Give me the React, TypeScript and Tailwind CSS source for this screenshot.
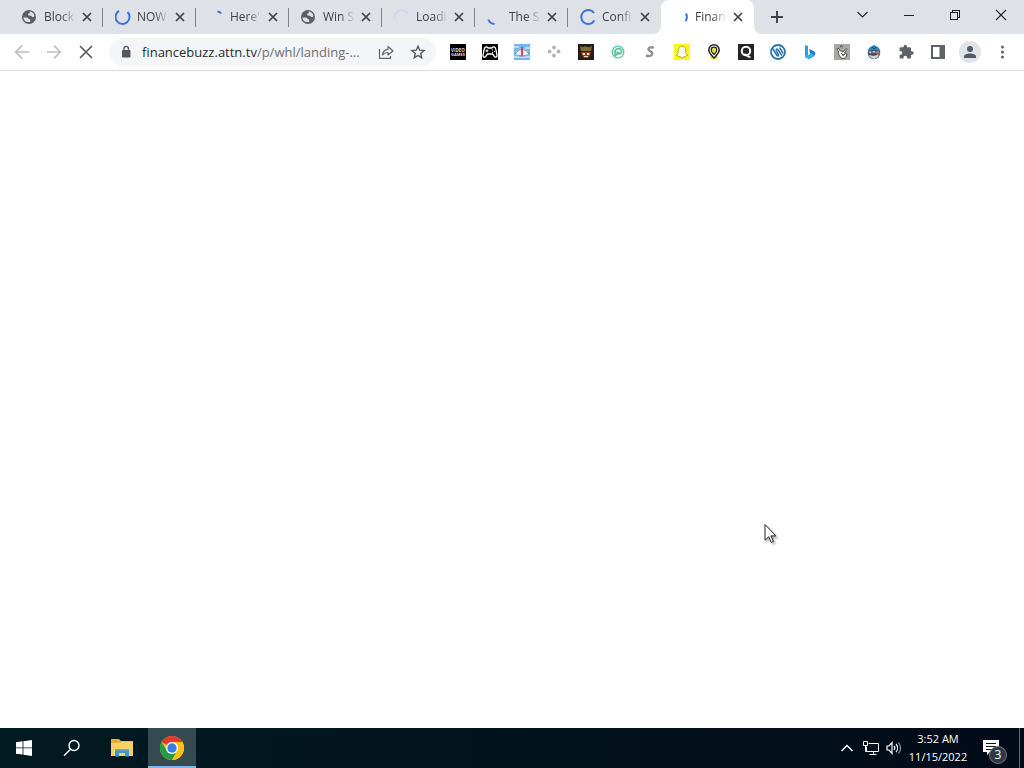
import type { ReactNode } from "react";

type TabInfo = { title: string; icon: ReactNode; active?: boolean; divider?: boolean };

function Globe() {
  return (
    <svg viewBox="0 0 16 16" className="size-4" aria-hidden="true">
      <circle cx="7" cy="8" r="7" fill="#5b5f64" />
      <path d="M1.5 8.4h3.200c1.500 0 1.800.8 1.800 1.800h1.700v2.600c-3.500 1.100-6.600-1-6.700-4.400zM7.600 2.500c2.100.1 4 1.500 4.600 3.400.3 1-.1 2.200-1.200 2.200-1.200 0-1-.9-1.800-1.200-.8-.3-2.400.2-3-.9-.4-.8.1-1.500 1-1.500.7 0 .7-.8.4-2z" fill="#dee1e6" />
    </svg>
  );
}

function Arc({ d, color = "#3b73dc", faint = false }: { d: string; color?: string; faint?: boolean }) {
  return (
    <svg viewBox="0 0 16 16" className="size-4" aria-hidden="true">
      <path d={d} fill="none" stroke={color} strokeWidth="2" strokeOpacity={faint ? 0.6 : 1} />
    </svg>
  );
}

const tabs: TabInfo[] = [
  { title: "Block", icon: <Globe />, divider: true },
  { title: "NOW", icon: <Arc d="M4 1.9A7 7 0 1 0 12.500 3" />, divider: true },
  { title: "Here'", icon: <Arc d="M9.500 2.600Q12 3 13 4.500" />, divider: true },
  { title: "Win S", icon: <Globe />, divider: true },
  { title: "Loadi", icon: <Arc d="M1 10A7 7 0 0 1 14 5" color="#c3d5ee" faint />, divider: true },
  { title: "The S", icon: <Arc d="M1.300 10.500A7 7 0 0 0 7.500 15" />, divider: true },
  { title: "Confi", icon: <Arc d="M14 4A7 7 0 1 0 14.300 11.500" /> },
  { title: "Finan", icon: <Arc d="M13 4.400Q15 8 12.600 12.300" />, active: true },
];

function Tab({ title, icon, active, divider }: TabInfo) {
  return (
    <div className={`relative flex h-[34px] w-[93px] shrink-0 items-center pl-3 ${active ? "rounded-t-lg bg-white" : ""}`}>
      {active && (
        <>
          <svg viewBox="0 0 8 8" className="absolute bottom-0 -left-2 size-2" aria-hidden="true"><path d="M8 0v8H0a8 8 0 0 0 8-8z" fill="#fff" /></svg>
          <svg viewBox="0 0 8 8" className="absolute -right-2 bottom-0 size-2" aria-hidden="true"><path d="M0 0v8h8a8 8 0 0 1-8-8z" fill="#fff" /></svg>
        </>
      )}
      {icon}
      <a href="#" className="ml-1.5 w-8 text-[12px] leading-4 whitespace-nowrap text-[#3f4347] [mask-image:linear-gradient(to_right,black_55%,transparent)]">
        {title}
      </a>
      <button aria-label={`Close ${title}`} className="ml-[3px] flex size-4 items-center justify-center">
        <svg viewBox="0 0 16 16" className="size-4" aria-hidden="true"><path d="M4 4l8 8M12 4l-8 8" stroke="#3c4043" strokeWidth="1.700" /></svg>
      </button>
      {divider && <span className="absolute top-2 right-0 h-[19px] w-px bg-[#7f8287]" />}
    </div>
  );
}

const windowControls = [
  { name: "Search tabs", art: <path d="M4.500 8l5 5 5-5" /> },
  { name: "Minimize", art: <path d="M5 11.500h10" shapeRendering="crispEdges" /> },
  { name: "Restore", art: <path d="M5.500 8.500h7v7h-7zM7.500 8V6.500h7v7H13" shapeRendering="crispEdges" /> },
  { name: "Close window", art: <path d="M5 6l10 10M15 6L5 16" /> },
];

const extensions: { name: string; art: ReactNode }[] = [
  {
    name: "Video Games",
    art: (
      <>
        <path d="M0 0h16v16H0z" />
        <text x="8" y="7.500" textAnchor="middle" fontSize="4.500" fontWeight="700" fill="#ddd">VIDEO</text>
        <text x="8" y="11.500" textAnchor="middle" fontSize="4" fontWeight="700" fill="#ddd">GAMES</text>
      </>
    ),
  },
  {
    name: "Game controller",
    art: (
      <>
        <path d="M0 0h16v16H0z" />
        <path d="M5 3C3 2.600 2.400 4 1.900 6.500L1 11.500c-.2 2 1.700 2.300 2.700.9L5.500 10h5l1.800 2.400c1 1.400 2.900 1.100 2.700-.9l-.9-5C13.600 4 13 2.600 11 3L9.700 4H6.300z" fill="none" stroke="#fff" strokeWidth="1.300" />
        <path d="M3.500 6.800h3M5 5.300v3M10 6h1M12 7.500h1M10 8.500h1" stroke="#fff" />
      </>
    ),
  },
  {
    name: "Airplane",
    art: (
      <>
        <path d="M0 0h16v16H0z" fill="#72b7ee" />
        <path d="M0 2h5v2H0zM11 3h5v2h-5zM0 12h16v2H0z" fill="#b5dbf5" />
        <path d="M1 10C3 5 6 4.500 8 4.500S13 5 15 10l-4 1H5z" fill="#e8f0f8" />
        <path d="M1 10c2-3.500 4.500-4.500 7-4.500s5 1 7 4.500" fill="none" stroke="#5679b5" />
        <path d="M8 3v9" stroke="#cf4466" strokeWidth="2" /><path d="M5 12h6" stroke="#d26a86" />
      </>
    ),
  },
  {
    name: "Dots",
    art: <g fill="#b3b5b9"><circle cx="8" cy="3.500" r="1.900" /><circle cx="3.500" cy="7.500" r="1.900" /><circle cx="12.500" cy="7.500" r="1.900" /><circle cx="8" cy="11.500" r="1.900" /></g>,
  },
  {
    name: "Bandit game",
    art: (
      <>
        <path d="M0 0h16v16H0z" fill="#241b18" />
        <path d="M2 2l2 1h2l1-1 2 1h3l2-1-1 5H3z" fill="#8a6c35" />
        <path d="M3 3.500h2M7 4h2M11 3.500h2M4 6h3M9 6h3" stroke="#4e7636" strokeWidth="1.200" />
        <path d="M3 8h10l-1 4-2 2H6l-2-2z" fill="#8f3d30" />
        <path d="M4.500 9h2.500v2H5zM9 9h2.500l-.5 2H9zM6 12h4v1H6z" fill="#f6dfc4" />
      </>
    ),
  },
  {
    name: "Green leaf",
    art: (
      <g fill="none" stroke="#55c49d">
        <circle cx="8" cy="8" r="5.800" strokeWidth="1.300" />
        <path d="M5 12V8c0-4 6.500-4.500 6.500-1S7 11 7 8M5 12l4-4" strokeWidth="1.700" />
      </g>
    ),
  },
  { name: "S", art: <path d="M12 3.700C9 2.700 6.700 3.200 6.400 5.200c-.3 2.300 4.200 2 3.900 4.400-.3 2.300-3.500 2.900-6.300 1.900" fill="none" stroke="#8e9093" strokeWidth="2.400" /> },
  {
    name: "Snapchat",
    art: (
      <>
        <path d="M0 0h16v16H0z" fill="#fff61a" />
        <path d="M8 2.200c2.300 0 3.400 1.500 3.400 3.500v1.400l1.200.3-1.100 1.200c.3 1.300 1.200 2 2.400 2.400l-2.200 1-.4.900-1.600-.1L8 14l-1.700-1.200-1.600.1-.4-.9-2.200-1c1.200-.4 2.100-1.100 2.400-2.400L3.400 7.400l1.200-.3V5.700c0-2 1.100-3.500 3.400-3.500z" fill="#fff" stroke="#a1972a" strokeWidth=".8" />
      </>
    ),
  },
  {
    name: "Location pin",
    art: (
      <>
        <ellipse cx="8" cy="13.500" rx="4" ry="2" fill="#e9ed35" />
        <path d="M8 14C5 11 2.800 9 2.800 6a5.200 5.200 0 0 1 10.400 0C13.200 9 11 11 8 14z" fill="#fff" stroke="#222" strokeWidth="1.500" />
        <path d="M8 10.500C6.500 9 5.200 8 5.200 6a2.800 2.800 0 0 1 5.600 0c0 2-1.300 3-2.800 4.500z" fill="#dfe13b" stroke="#222" strokeWidth="1.200" />
      </>
    ),
  },
  {
    name: "Q",
    art: (
      <>
        <path d="M0 0h16v16H0z" fill="#252527" />
        <ellipse cx="8" cy="7" rx="4.200" ry="4.300" fill="none" stroke="#fff" strokeWidth="2" />
        <path d="M6.500 10.500c2-.7 3 3.500 6 2.200" fill="none" stroke="#fff" strokeWidth="1.700" />
      </>
    ),
  },
  {
    name: "Blue circle",
    art: (
      <g fill="none" stroke="#2873ac" strokeLinecap="round">
        <circle cx="8" cy="8" r="7" strokeWidth="1.800" />
        <path d="M3 5l4 6.500c.8 1 1.800.2 1.400-.8L6.300 6.500c-.5-1.300.8-2.100 1.700-.9l3.500 5.600M9.800 4l3 5" strokeWidth="1.500" />
      </g>
    ),
  },
  {
    name: "Bing",
    art: (
      <>
        <path d="M3 1l3 1v9l-3 2z" fill="#2b9df0" />
        <path d="M7 5l4.500 2c2.300 1 2.400 3.800.5 5.200L7 15l-4-2 5.500-3z" fill="#1c79dc" />
        <path d="M3 13l6-3.700 3 1.500c-.3 1.500-2.500 2.500-5 4.200z" fill="#2eb7e6" />
      </>
    ),
  },
  {
    name: "Hand",
    art: (
      <>
        <path d="M0 0h16v16H0z" fill="#aaa6a2" />
        <path d="M7 14l-2-3-1-2 1-1-2-3 1.300-1L7 7.500l1-.5 1 1 3-3.500 1 .8L10.500 9l2.500 1-1 3-2 1.500z" fill="#f5f3ef" stroke="#393735" strokeWidth=".8" />
        <path d="M7 9l2 2 2-1M6 3.500l1-2 2 1.500M9 10v2" fill="none" stroke="#494642" />
      </>
    ),
  },
  {
    name: "Pirate",
    art: (
      <>
        <circle cx="8" cy="8.700" r="6.300" fill="#46515d" />
        <path d="M1.500 7L4 3l4-2 4 2 2.500 4C11 5.700 5 5.700 1.500 7z" fill="#2486cd" />
        <path d="M2.500 8c3-1.200 8-1.200 11 0L12 9.500l-4-1-4 1z" fill="#d9c1aa" />
        <path d="M3 11l5 1 5-2-1 3-4 2-4-2z" fill="#cfd4d8" />
        <path d="M11 8l3 1-2 3z" fill="#bc643f" />
        <path d="M6 3l2 2 2-2M5 8h2M9 8h2" stroke="#163d62" fill="none" />
      </>
    ),
  },
  {
    name: "Extensions",
    art: <path d="M14 7.300h-1V4.600C13 3.900 12.400 3.300 11.700 3.300H9V2.500a1.700 1.700 0 0 0-3.400 0v.8H2.900c-.7 0-1.300.6-1.300 1.300v2.500h.9a1.800 1.800 0 0 1 0 3.600h-.9v2.600c0 .7.600 1.300 1.300 1.300h2.600v-1a1.800 1.800 0 0 1 3.600 0v1h2.600c.7 0 1.300-.6 1.300-1.300v-2.600h1a1.700 1.700 0 0 0 0-3.400z" fill="#5f6368" />,
  },
  { name: "Side panel", art: <path d="M1 1h14v14H1zM3 3v10h6.500V3z" fillRule="evenodd" fill="#5f6368" /> },
];

function ToolButton({ label, children }: { label: string; children: ReactNode }) {
  return <button aria-label={label} className="flex size-8 shrink-0 items-center justify-center">{children}</button>;
}

function AddressBar() {
  return (
    <div className="mr-1.5 ml-[7px] flex h-7 min-w-0 flex-1 items-center rounded-full bg-[#f4f5f6] pr-0.5 pl-[11px]">
      <svg viewBox="0 0 12 14" className="h-3.5 w-3 shrink-0" aria-hidden="true"><path d="M2.500 5.500h7.500v6.500H2.500z" fill="#55595e" stroke="#55595e" strokeLinejoin="round" /><path d="M4 5.500V3.500a2.200 2.200 0 0 1 4.400 0v2" fill="none" stroke="#55595e" strokeWidth="1.300" /></svg>
      <button className="ml-2.5 min-w-0 flex-1 text-left text-[13px] leading-5 whitespace-nowrap text-[#6b6f73]">
        <span className="text-[#292c2f]">financebuzz.attn.tv</span>/p/whl/landing-...
      </button>
      <ToolButton label="Share this page">
        <svg viewBox="0 0 16 16" className="size-4" fill="none" stroke="#5f6368" strokeWidth="1.200" aria-hidden="true"><path d="M1.500 5v9.300h11V12M4.500 11c.4-3.800 2.500-5.600 5.500-5.700V2.500L15 7l-5 4V8.500C7.500 8.500 6 9 4.500 11z" strokeLinejoin="round" /></svg>
      </ToolButton>
      <ToolButton label="Bookmark this tab">
        <svg viewBox="0 0 16 16" className="size-4" fill="none" stroke="#55595e" strokeWidth="1.400" aria-hidden="true"><path d="M8 2.200l1.700 4 4.400.4-3.400 2.800 1 4.300L8 11.500l-3.700 2.200 1-4.300-3.400-2.800 4.400-.4z" /></svg>
      </ToolButton>
    </div>
  );
}

function Toolbar() {
  return (
    <div className="flex h-[37px] items-center border-b border-[#dcdde0] bg-white px-1.5">
      <ToolButton label="Back"><svg viewBox="0 0 16 16" className="size-4" fill="none" stroke="#bcbec1" strokeWidth="1.700" aria-hidden="true"><path d="M15 8H2M8 1.700L1.700 8 8 14.300" /></svg></ToolButton>
      <ToolButton label="Forward"><svg viewBox="0 0 16 16" className="size-4" fill="none" stroke="#bcbec1" strokeWidth="1.700" aria-hidden="true"><path d="M1 8h13M8 1.700L14.300 8 8 14.300" /></svg></ToolButton>
      <ToolButton label="Stop loading"><svg viewBox="0 0 16 16" className="size-4" fill="none" stroke="#55595e" strokeWidth="1.600" aria-hidden="true"><path d="M2 2l12 12M14 2L2 14" /></svg></ToolButton>
      <AddressBar />
      {extensions.map((item) => (
        <ToolButton key={item.name} label={item.name}>
          <svg viewBox="0 0 16 16" className="size-4" aria-hidden="true">{item.art}</svg>
        </ToolButton>
      ))}
      <ToolButton label="Profile">
        <span className="flex size-[22px] items-center justify-center rounded-full bg-[#e0e3e7]">
          <svg viewBox="0 0 16 16" className="size-4" fill="#515963" aria-hidden="true"><circle cx="8" cy="5" r="3" /><path d="M2 14v-1.500C2 8.500 14 8.500 14 12.500V14z" /></svg>
        </span>
      </ToolButton>
      <ToolButton label="Menu"><svg viewBox="0 0 16 16" className="size-4" fill="#5f6368" aria-hidden="true"><circle cx="8.500" cy="3" r="1.500" /><circle cx="8.500" cy="8" r="1.500" /><circle cx="8.500" cy="13" r="1.500" /></svg></ToolButton>
    </div>
  );
}

function Taskbar() {
  return (
    <footer className="flex h-10 shrink-0 items-stretch bg-gradient-to-r from-[#021a21] via-[#02131d] to-[#020a18] text-white">
      <button aria-label="Start" className="flex w-12 items-center justify-center">
        <svg viewBox="0 0 16 16" className="size-4" fill="#fff" aria-hidden="true"><path d="M0 2.300L6.600 1.300v6.200H0zM7.400 1.200L16 0v7.500H7.400zM0 8.300h6.600v6.300L0 13.700zM7.400 8.300H16V16l-8.600-1.200z" /></svg>
      </button>
      <button aria-label="Search" className="flex w-12 items-center justify-center">
        <svg viewBox="0 0 18 18" className="size-[18px]" fill="none" stroke="#fff" strokeWidth="1.400" aria-hidden="true"><circle cx="11" cy="6.500" r="5" /><path d="M7.500 10.300L1 16.800" /></svg>
      </button>
      <button aria-label="File Explorer" className="ml-0.5 flex w-12 items-center justify-center">
        <svg viewBox="0 0 22 20" className="h-5 w-[22px]" aria-hidden="true">
          <path d="M0 1h8l2 2h12v15H0z" fill="#e7ab32" /><path d="M0 5l9-.2L11 3.500h11V18H0z" fill="#f8d06a" />
          <path d="M4 18.500V11h14v7.500h-4V15H8v3.500z" fill="#4498c8" /><path d="M4 11h14v1.500H4z" fill="#68a9c4" />
        </svg>
      </button>
      <button aria-label="Google Chrome" className="ml-0.5 flex w-12 items-center justify-center border-b-2 border-[#76b9ed] bg-[#354951] pt-0.5">
        <svg viewBox="0 0 24 24" className="size-6" aria-hidden="true">
          <circle cx="12" cy="12" r="12" fill="#fbc116" />
          <path d="M12 12L1.600 6A12 12 0 0 1 22.400 6z" fill="#dc3d30" />
          <path d="M1.600 6A12 12 0 0 0 12 24l5.200-9L12 12 7 15z" fill="#269a49" />
          <path d="M12 6h10.400A12 12 0 0 1 12 24l5.200-9z" fill="#fbc116" />
          <circle cx="12" cy="12" r="6" fill="#fff" /><circle cx="12" cy="12" r="4.700" fill="#377be5" />
        </svg>
      </button>
      <div className="flex-1" />
      <button aria-label="Show hidden icons" className="flex w-6 items-center justify-center">
        <svg viewBox="0 0 14 14" className="size-3.5" fill="none" stroke="#fff" strokeWidth="1.400" aria-hidden="true"><path d="M1.500 10L7 4.500l5.500 5.500" /></svg>
      </button>
      <button aria-label="Network" className="flex w-6 items-center justify-center">
        <svg viewBox="0 0 18 16" className="h-4 w-[18px]" fill="none" stroke="#fff" strokeWidth="1" aria-hidden="true"><path d="M6.500 3.500h10v8H4.500v-5M11.500 11.500v3M7.500 14.500h7M1.500 1.500h4v4h-4zM3.500 5.500v6h1" /></svg>
      </button>
      <button aria-label="Volume" className="flex w-[22px] items-center justify-center">
        <svg viewBox="0 0 18 16" className="h-4 w-[18px]" fill="none" stroke="#fff" strokeWidth="1.200" aria-hidden="true"><path d="M2 6h2l3-3.500v11L4 10H2zM9 6c1 1.200 1 2.800 0 4M11 4c2 2.300 2 5.700 0 8" /><path d="M13.500 2.500c2.500 3.300 2.500 7.700 0 11" stroke="#8b949c" /></svg>
      </button>
      <button className="flex w-[66px] flex-col items-center justify-center text-[11px] leading-[18px] whitespace-nowrap">
        <span>3:52 AM</span><span>11/15/2022</span>
      </button>
      <button aria-label="Notifications" className="relative flex w-12 items-center justify-center">
        <svg viewBox="0 0 18 18" className="mr-2 size-[18px]" aria-hidden="true"><path d="M1 1h16v12H8l-3 3v-3H1z" fill="#fff" /><path d="M4 4.500h10M4 7.500h10M4 10.500h6" stroke="#07131f" /></svg>
        <span className="absolute right-3 bottom-1 flex size-[18px] items-center justify-center rounded-full border border-[#717982] bg-[#303842] text-[12px] leading-4">3</span>
      </button>
      <button aria-label="Show desktop" className="w-[5px] border-l border-[#626a73]" />
    </footer>
  );
}

export default function App() {
  return (
    <div className="flex h-screen flex-col overflow-hidden bg-white font-['Open_Sans','Noto_Sans',sans-serif]">
      <header className="shrink-0">
        <div className="flex h-[34px] bg-[#dee1e6]">
          <nav aria-label="Open tabs" className="flex pl-2.5">
            {tabs.map((tab) => <Tab key={tab.title} {...tab} />)}
          </nav>
          <button aria-label="New tab" className="ml-[7px] flex w-8 items-center justify-center">
            <svg viewBox="0 0 14 14" className="size-3.5" stroke="#3c4043" strokeWidth="1.900" aria-hidden="true"><path d="M7 1v12M1 7h12" /></svg>
          </button>
          <div className="flex-1" />
          {windowControls.map((control) => (
            <button key={control.name} aria-label={control.name} className="flex h-7 w-[46px] items-center justify-center">
              <svg viewBox="0 0 20 20" className="size-5" fill="none" stroke="#202124" strokeWidth="1.100" aria-hidden="true">{control.art}</svg>
            </button>
          ))}
        </div>
        <Toolbar />
      </header>
      <main className="min-h-0 flex-1 bg-white" />
      <Taskbar />
      <svg viewBox="0 0 16 24" className="pointer-events-none absolute top-[523px] left-[764px] h-6 w-4 drop-shadow-[2px_2px_1px_rgba(0,0,0,0.3)]" aria-hidden="true">
        <path d="M1 1.500v15.800l3.700-3.600 2.500 5.700 2.200-1-2.500-5.500h5z" fill="#fff" stroke="#222" />
      </svg>
    </div>
  );
}
